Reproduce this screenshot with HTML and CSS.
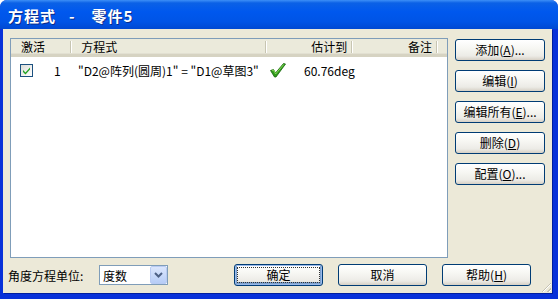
FILE: index.html
```html
<!DOCTYPE html>
<html lang="zh-CN">
<head>
  <meta charset="UTF-8">
  <title>方程式 - 零件5</title>
  <link rel="stylesheet" href="styles.css">
</head>
<body>
  <div class="window">
    <div class="titlebar">
      <span>方程式</span><span class="dash">-</span><span>零件5</span>
    </div>

    <div class="content">
      <div class="top">
        <div class="list">
          <div class="list-head">
            <div class="col c-active">激活</div>
            <div class="col c-eq">方程式</div>
            <div class="col c-val">估计到</div>
            <div class="col c-note">备注</div>
            <div class="col c-rest"></div>
          </div>
          <div class="list-row">
            <div class="cell c-active">
              <span class="checkbox">
                <svg width="9" height="9" viewBox="0 0 9 9"><path d="M1 4 L3.5 6.5 L8 1.5 L8 3.5 L3.5 8.5 L1 6 Z" fill="#21a121"/></svg>
              </span>
              <span class="num">1</span>
            </div>
            <div class="cell c-eq">"D2@阵列(圆周)1" = "D1@草图3"</div>
            <div class="cell c-val">
              <svg class="ok" width="16" height="15" viewBox="0 0 16 15">
                <path d="M0.5 7.5 L3.5 6.5 L5.5 10 L13.5 0.5 L15.5 1 L6 14 L4.5 14 Z" fill="#2f9b1c" stroke="#15630a" stroke-width="0.8" stroke-linejoin="round"/>
                <path d="M2 7.5 L3.5 7 L5.6 11 L13.8 1.4" fill="none" stroke="#8ee05a" stroke-width="0.9"/>
              </svg>
              <span>60.76deg</span>
            </div>
          </div>
        </div>

        <div class="side">
          <button class="btn">添加(<u>A</u>)...</button>
          <button class="btn">编辑(<u>I</u>)</button>
          <button class="btn">编辑所有(<u>E</u>)...</button>
          <button class="btn">删除(<u>D</u>)</button>
          <button class="btn">配置(<u>O</u>)...</button>
        </div>
      </div>

      <div class="bottom">
        <span class="label">角度方程单位:</span>
        <div class="combo">
          <span class="combo-text">度数</span>
          <span class="combo-btn">
            <svg width="9" height="6" viewBox="0 0 9 6"><path d="M1 1 L4.5 4.5 L8 1" fill="none" stroke="#4d6185" stroke-width="2"/></svg>
          </span>
        </div>
        <button class="btn default"><span class="focus">确定</span></button>
        <button class="btn">取消</button>
        <button class="btn">帮助(<u>H</u>)</button>
      </div>
      <div class="grip"></div>
    </div>
  </div>
</body>
</html>
```

FILE: styles.css
```css
* {
  box-sizing: border-box;
}

body {
  margin: 0;
  width: 558px;
  height: 299px;
  overflow: hidden;
  background: #fff;
  font-family: Tahoma, "Noto Sans CJK SC", sans-serif;
  font-size: 12px;
  color: #000;
}

.window {
  width: 558px;
  height: 299px;
  display: flex;
  flex-direction: column;
  background: #0831d9;
  border-radius: 7px 7px 0 0;
}

.titlebar {
  height: 29px;
  padding: 0 0 0 8px;
  line-height: 31px;
  color: #fff;
  font-weight: bold;
  font-size: 15px;
  font-family: "Noto Sans CJK SC", sans-serif;
  border-radius: 7px 7px 0 0;
  background: linear-gradient(#3d8ff7 0, #0b61e6 3px, #0058ee 40%, #0054e6 75%, #0049d2 100%);
  text-shadow: 1px 1px 0 #0b2d8a;
  letter-spacing: 1px;
}

.dash {
  margin: 0 16px 0 13px;
}

.content {
  flex: 1;
  position: relative;
  margin: 0 6px 6px 3px;
  background: #ece9d8;
  padding: 9px 7px 0 7px;
  box-shadow: 1px 1px 0 #001ea0;
}

.top {
  display: flex;
  gap: 7px;
}

.list {
  width: 438px;
  height: 220px;
  background: #fff;
  border: 1px solid #7f9db9;
  font-family: "Noto Sans CJK SC", sans-serif;
}

.list-head {
  display: flex;
  height: 18px;
  background: #ebeadb;
  border-bottom: 3px solid #d6d3c2;
  box-shadow: 0 -1px 0 #e2e0d2 inset;
}

.col {
  height: 15px;
  line-height: 15px;
  padding: 0 5px;
  position: relative;
}

.col::after {
  content: "";
  position: absolute;
  right: 0;
  top: 2px;
  bottom: 1px;
  width: 1px;
  background: #c7c5b2;
  box-shadow: 1px 0 0 #fff;
}

.c-active {
  width: 61px;
  padding-left: 10px;
}

.c-eq {
  width: 198px;
  padding-left: 10px;
}

.c-val {
  width: 87px;
  text-align: right;
}

.c-note {
  width: 86px;
  text-align: right;
}

.c-rest {
  flex: 1;
}

.c-rest::after {
  display: none;
}

.list-row {
  display: flex;
  height: 24px;
  align-items: center;
  margin-top: 1px;
}

.cell {
  display: flex;
  align-items: center;
}

.cell.c-active {
  padding-left: 9px;
}

.cell.c-eq {
  padding-left: 6px;
  white-space: nowrap;
}

.cell.c-val {
  padding-left: 0;
  gap: 18px;
  justify-content: flex-start;
}

.checkbox {
  width: 13px;
  height: 13px;
  border: 1px solid #1c5180;
  background: linear-gradient(135deg, #dcdcd7, #fff);
  display: flex;
  align-items: center;
  justify-content: center;
}

.num {
  margin-left: 21px;
}

.side {
  display: flex;
  flex-direction: column;
  gap: 9px;
  padding-top: 1px;
}

.btn {
  width: 90px;
  height: 22px;
  padding: 0;
  border: 1px solid #003c74;
  border-radius: 3px;
  background: linear-gradient(#ffffff 0, #f7f7f3 40%, #ecebe6 80%, #d6d0c5 100%);
  font-family: "Noto Sans CJK SC", sans-serif;
  font-size: 12px;
  color: #000;
  line-height: 18px;
}

.bottom {
  display: flex;
  align-items: center;
  margin-top: 6px;
  font-family: "Noto Sans CJK SC", sans-serif;
}

.label {
  width: 90px;
  margin-left: -2px;
}

.combo {
  width: 69px;
  height: 20px;
  border: 1px solid #7f9db9;
  background: #fff;
  display: flex;
  align-items: center;
  margin-left: 1px;
}

.combo-text {
  flex: 1;
  padding-left: 3px;
}

.combo-btn {
  width: 17px;
  height: 18px;
  border: 1px solid #b9cbf3;
  border-radius: 2px;
  background: linear-gradient(#dbe6fd, #b7cdf7);
  display: flex;
  align-items: center;
  justify-content: center;
}

.bottom .btn {
  width: 89px;
}

.bottom .default {
  margin-left: 66px;
  box-shadow: inset 0 0 0 1px #98b8ea, inset 0 -1px 0 2px #7da2ce;
  padding: 2px;
}

.focus {
  display: block;
  height: 100%;
  outline: 1px dotted #333;
  outline-offset: -1px;
  line-height: 16px;
}

.bottom .btn + .btn {
  margin-left: 15px;
}

.grip {
  position: absolute;
  right: 1px;
  bottom: 1px;
  width: 12px;
  height: 12px;
  background: repeating-linear-gradient(135deg, transparent 0 2px, #c5c2b2 2px 3px, #fff 3px 4px);
  clip-path: polygon(100% 0, 100% 100%, 0 100%);
}
```
